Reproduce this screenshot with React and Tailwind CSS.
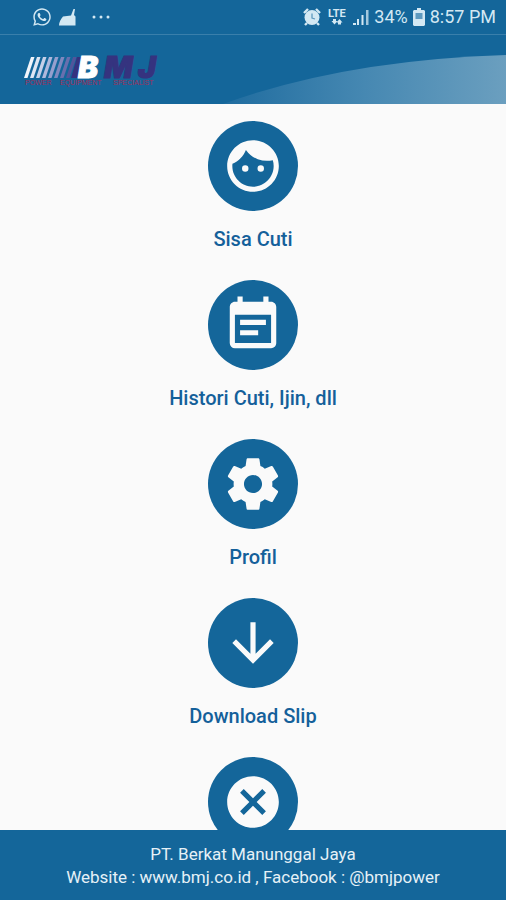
import { FaWhatsapp } from 'react-icons/fa'
import { MdArrowDownward, MdCancel, MdEventNote, MdFace } from 'react-icons/md'

const MENU = [
  { id: 'sisa-cuti', label: 'Sisa Cuti', icon: MdFace },
  { id: 'histori', label: 'Histori Cuti, Ijin, dll', icon: MdEventNote },
  { id: 'profil', label: 'Profil', icon: GearIcon },
  { id: 'slip', label: 'Download Slip', icon: MdArrowDownward },
]

const STRIPES = [
  { x: 0, color: '#f1f5fb' },
  { x: 6, color: '#dfe6f3' },
  { x: 12, color: '#c6d0e8' },
  { x: 18, color: '#aeb8dc' },
  { x: 24, color: '#959fce' },
  { x: 30, color: '#7f88bf' },
  { x: 36, color: '#686fae' },
  { x: 42, color: '#51559b' },
]

function GearIcon(props) {
  return (
    <svg viewBox="0 0 24 24" fill="currentColor" {...props}>
      <path d="M19.43 12.98c.04-.32.07-.64.07-.98s-.03-.66-.07-.98l2.11-1.65c.19-.15.24-.42.12-.64l-2-3.46c-.12-.22-.39-.3-.61-.22l-2.49 1c-.52-.4-1.08-.73-1.69-.98l-.38-2.65C14.46 2.18 14.25 2 14 2h-4c-.25 0-.46.18-.49.42l-.38 2.65c-.61.25-1.17.59-1.69.98l-2.49-1c-.23-.09-.49 0-.61.22l-2 3.46c-.13.22-.07.49.12.64l2.11 1.65c-.04.32-.07.65-.07.98s.03.66.07.98l-2.11 1.65c-.19.15-.24.42-.12.64l2 3.46c.12.22.39.3.61.22l2.49-1c.52.4 1.08.73 1.69.98l.38 2.65c.03.24.24.42.49.42h4c.25 0 .46-.18.49-.42l.38-2.65c.61-.25 1.17-.59 1.69-.98l2.49 1c.23.09.49 0 .61-.22l2-3.46c.12-.22.07-.49-.12-.64l-2.11-1.65zM12 15.5c-1.93 0-3.5-1.57-3.5-3.5s1.57-3.5 3.5-3.5 3.5 1.57 3.5 3.5-1.57 3.5-3.5 3.5z" />
    </svg>
  )
}

function StatusBar() {
  return (
    <div className="flex h-[35px] items-center justify-between border-b border-[#3a7fab] pr-[10px] pl-8 text-[#d3e8f3]">
      <div className="flex items-center gap-[6px]">
        <FaWhatsapp className="size-5" aria-hidden="true" />
        <svg className="size-5" viewBox="0 0 20 20" fill="currentColor" aria-hidden="true">
          <path d="M1 18.5c0-3 1.500-6 4-9l8-1L15.500 2h1.500l-1 6 1.500 1.500v9z" />
        </svg>
        <svg className="ml-2 size-5" viewBox="0 0 20 20" fill="currentColor" aria-hidden="true">
          <circle cx="2" cy="10" r="1.5" />
          <circle cx="9" cy="10" r="1.5" />
          <circle cx="16" cy="10" r="1.5" />
        </svg>
      </div>
      <div className="flex items-center gap-[5px] text-[18px] leading-5">
        <svg className="size-[18px]" viewBox="0 0 18 18" aria-hidden="true">
          <path d="M1 5 5 1M17 5l-4-4M4 15l-2 2M14 15l2 2" stroke="currentColor" strokeWidth="2.4" />
          <circle cx="9" cy="9.5" r="7.5" fill="currentColor" />
          <path d="M9 5.500v4.500l3 1" fill="none" stroke="#5f9abf" strokeWidth="1.3" />
        </svg>
        <svg className="ml-[2px] size-5" viewBox="0 0 20 20" fill="currentColor" aria-hidden="true">
          <text x="0" y="10" fontSize="11" fontWeight="700" fontFamily="Roboto, sans-serif">LTE</text>
          <path d="M5 12h3v2h1.500l-3 3.500-3-3.500H5zM13 17.500h-3v-2H8.500l3-3.500 3 3.500H13z" />
        </svg>
        <svg className="h-[18px] w-4" viewBox="0 0 16 18" fill="currentColor" aria-hidden="true">
          <path d="M0 15h3v2H0zM4 11h2v6H4zM8.500 7h2v10h-2z" />
          <path d="M13 2h2.500v15H13z" opacity=".75" />
        </svg>
        <span>34%</span>
        <svg className="h-[18px] w-3" viewBox="0 0 12 18" aria-hidden="true">
          <path d="M4 0h4v2h3l1 1v14l-1 1H1l-1-1V3l1-1h3z" fill="currentColor" />
          <path d="M2.500 5h7v6h-7z" fill="#5f9abf" />
        </svg>
        <span>8:57 PM</span>
      </div>
    </div>
  )
}

function Logo() {
  return (
    <svg className="h-[42px] w-[144px]" viewBox="0 0 144 42" role="img" aria-label="BMJ Power Equipment Specialist">
      {STRIPES.map((stripe) => (
        <path
          key={stripe.x}
          d="M7 8h3.500L3.500 29H0z"
          transform={`translate(${stripe.x} 0)`}
          fill={stripe.color}
        />
      ))}
      <path d="M53 8h9l-6 21h-9z" fill="#35337f" />
      <g fontFamily="Inter, sans-serif" fontSize="30" fontWeight="900" fontStyle="italic" strokeWidth="1">
        <text x="80" y="29" fill="#35337f" stroke="#35337f">M</text>
        <text x="114" y="29" fill="#35337f" stroke="#35337f">J</text>
        <text x="54" y="29" fill="#ffffff" stroke="#ffffff">B</text>
      </g>
      <g fill="#a0305a" fontFamily="Liberation Sans, sans-serif" fontSize="7">
        <text x="1" y="36">POWER</text>
        <text x="36" y="36">EQUIPMENT</text>
        <text x="89" y="36">SPECIALIST</text>
      </g>
    </svg>
  )
}

function MenuButton({ label, icon: Icon, ...props }) {
  return (
    <button type="button" className="flex flex-col items-center gap-4" {...props}>
      <span className="flex size-[90px] items-center justify-center rounded-full bg-[#14669a] text-[#fafafa]">
        <Icon className="size-[62px]" aria-hidden="true" />
      </span>
      {label && <span className="text-[20px] leading-6 font-medium text-[#14609a]">{label}</span>}
    </button>
  )
}

export default function App() {
  return (
    <div className="flex h-screen flex-col bg-[#fafafa] font-['Roboto',sans-serif]">
      <header className="relative shrink-0 bg-[#14669a]">
        <svg
          className="absolute right-0 bottom-0 h-[49px] w-[56%]"
          viewBox="0 0 281 49"
          preserveAspectRatio="none"
          aria-hidden="true"
        >
          <defs>
            <linearGradient id="swoosh" x1="0" x2="1">
              <stop offset="0" stopColor="#1f6c9f" />
              <stop offset="0.5" stopColor="#4688b2" />
              <stop offset="1" stopColor="#6b9fbf" />
            </linearGradient>
          </defs>
          <path d="M0 49Q120 5 281 0V49z" fill="url(#swoosh)" />
        </svg>
        <StatusBar />
        <div className="relative flex h-[69px] items-center px-6">
          <Logo />
        </div>
      </header>

      <main className="min-h-0 flex-1 overflow-y-auto pt-[17px] [scrollbar-width:none]">
        <nav className="flex flex-col items-center gap-[29px] pb-6">
          {MENU.map((item) => (
            <MenuButton key={item.id} label={item.label} icon={item.icon} />
          ))}
          <MenuButton icon={MdCancel} aria-label="Keluar" />
        </nav>
      </main>

      <footer className="shrink-0 bg-[#14669a] px-4 pt-[13px] pb-[11px] text-center text-[17px] leading-[23px] text-[#e6f1f7]">
        <p>PT. Berkat Manunggal Jaya</p>
        <p>Website : www.bmj.co.id , Facebook : @bmjpower</p>
      </footer>
    </div>
  )
}
